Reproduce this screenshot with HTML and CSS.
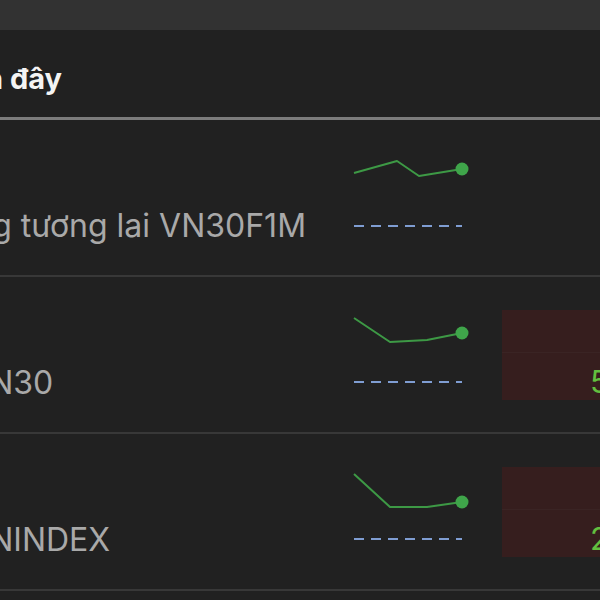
FILE: index.html
```html
<!DOCTYPE html>
<html lang="vi">
<head>
  <meta charset="UTF-8">
  <meta content="width=device-width, initial-scale=1.0" name="viewport">
  <title>Đã xem gần đây</title>
  <link rel="stylesheet" href="styles.css">
</head>
<body>
<div class="topbar"></div>
<main class="panel">
  <header class="panel-head">
    <h2 class="panel-title"><span>Đã xem gần đây</span></h2>
  </header>
  <ul class="watchlist">
    <li class="quote">
      <div class="quote-name"><span>Hợp đồng tương lai VN30F1M</span></div>
      <svg class="spark" viewBox="0 0 120 80" width="120" height="80">
        <polyline class="spark-line" points="4,17 47,5 69,20 112,13"/>
        <circle class="spark-dot" cx="112" cy="13" r="6.5"/>
        <line class="spark-ref" x1="4" y1="70" x2="112" y2="70"/>
      </svg>
      <div class="quote-price quote-price--flat"></div>
    </li>
    <li class="quote">
      <div class="quote-name"><span>Chỉ số VN30</span></div>
      <svg class="spark" viewBox="0 0 120 80" width="120" height="80">
        <polyline class="spark-line" points="4,5 40,29 77,27 112,20"/>
        <circle class="spark-dot" cx="112" cy="20" r="6.5"/>
        <line class="spark-ref" x1="4" y1="69" x2="112" y2="69"/>
      </svg>
      <div class="quote-price"><span>5.32</span></div>
    </li>
    <li class="quote">
      <div class="quote-name"><span>Chỉ số VNINDEX</span></div>
      <svg class="spark" viewBox="0 0 120 80" width="120" height="80">
        <polyline class="spark-line" points="4,4 40,37 77,37 112,32"/>
        <circle class="spark-dot" cx="112" cy="32" r="6.5"/>
        <line class="spark-ref" x1="4" y1="69" x2="112" y2="69"/>
      </svg>
      <div class="quote-price"><span>2.18</span></div>
    </li>
  </ul>
</main>
</body>
</html>
```

FILE: styles.css
```css
* {
  box-sizing: border-box;
}

html,
body {
  margin: 0;
  overflow: hidden;
}

body {
  background: #212121;
  font-family: Inter, "Liberation Sans", Arial, sans-serif;
  height: 600px;
}

.topbar {
  background: #323232;
  block-size: 30px;
}

.panel {
  background: #212121;
}

.panel-head {
  block-size: 90px;
  border-block-end: 3px solid #7c7c7c;
  padding-block-start: 32px;
}

/* title is cut at the left edge of the frame */
.panel-title {
  color: #f4f4f4;
  display: flex;
  font-size: 29px;
  font-weight: 700;
  inline-size: 62px;
  justify-content: flex-end;
  line-height: 34px;
  margin: 0;
  overflow: hidden;
  white-space: nowrap;
}

.watchlist {
  list-style: none;
  margin: 0;
  padding: 0;
}

.quote {
  block-size: 157px;
  border-block-end: 2px solid #383838;
  display: flex;
  overflow: hidden;
}

/* names are cut at the left edge of the frame */
.quote-name {
  align-self: flex-end;
  color: #a9a9a9;
  flex: 0 0 350px;
  font-size: 32px;
  line-height: 34px;
  overflow: hidden;
  padding-block-end: 32px;
  white-space: nowrap;

  & span {
    display: block;
    margin-inline-start: -137px;
  }
}

.spark {
  display: block;
  flex: 0 0 120px;
  margin-block-start: 36px;
}

.spark-line {
  fill: none;
  stroke: #3d9945;
  stroke-linejoin: round;
  stroke-width: 2;
}

.spark-dot {
  fill: #3fa54a;
}

.spark-ref {
  stroke: #7f9dd2;
  stroke-dasharray: 10 7;
  stroke-width: 2;
}

.quote-price {
  background: #361e1e;
  block-size: 90px;
  color: #62c03f;
  flex: 0 0 150px;
  font-size: 31px;
  line-height: 32px;
  margin-inline-start: 32px;
  margin-block-start: 33px;
  padding-block-start: 56px;
  padding-inline-start: 88px;
  position: relative;
  white-space: nowrap;

  &::before {
    background: #3a2424;
    block-size: 1px;
    content: "";
    inset-inline: 0;
    position: absolute;
    top: 42px;
  }
}

.quote-price--flat {
  background: transparent;

  &::before {
    display: none;
  }
}
```
